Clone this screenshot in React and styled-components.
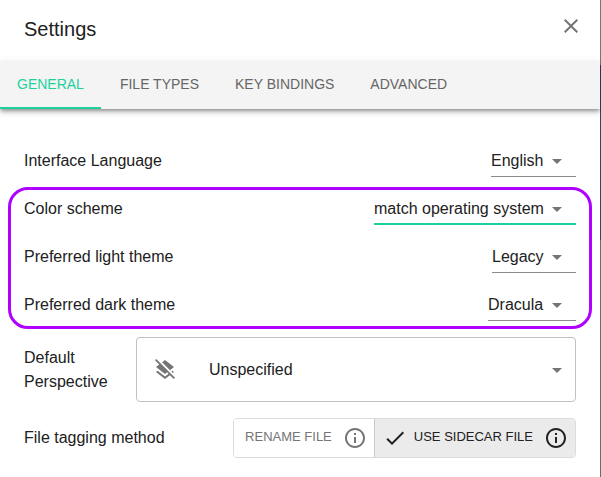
import React, { useState } from "react";
import styled, { createGlobalStyle, css } from "styled-components";
import { MdArrowDropDown, MdCheck, MdClose, MdInfoOutline, MdLayersClear } from "react-icons/md";

const GlobalStyle = createGlobalStyle`
  *, *::before, *::after { box-sizing: border-box; }
  body {
    margin: 0;
    background: linear-gradient(#77777b 0 65px, #33475f 65px 240px, #6b6b6e 240px);
    color: #212121;
    font: 16px/24px "Liberation Sans", Arial, sans-serif;
  }
  button, select { font: inherit; color: inherit; }
`;

const Dialog = styled.main`
  min-height: 100vh;
  margin-right: 1px;
  background: #fff;
`;

const Header = styled.header`
  display: flex;
  align-items: center;
  justify-content: space-between;
  height: 61px;
  padding: 0 17px 4px 24px;
`;

const Title = styled.h1`
  margin: 0;
  font-size: 20px;
  line-height: 32px;
  font-weight: 400;
`;

const IconButton = styled.button`
  display: flex;
  padding: 0;
  border: 0;
  background: none;
  color: #757575;
  margin-bottom: 5px;
  cursor: pointer;
`;

const TabBar = styled.nav`
  display: flex;
  gap: 2px;
  height: 48px;
  background: #f4f4f4;
  box-shadow: 0 2px 4px -1px rgba(0, 0, 0, 0.4), 0 4px 5px rgba(0, 0, 0, 0.14),
    0 1px 10px rgba(0, 0, 0, 0.06);
`;

const Tab = styled.button`
  padding: 0 17px;
  border: 0;
  border-bottom: 2px solid ${(p) => (p.$active ? "#1dd19f" : "transparent")};
  background: none;
  color: ${(p) => (p.$active ? "#1dd19f" : "#666")};
  font-size: 14px;
  line-height: 20px;
  text-transform: uppercase;
  white-space: nowrap;
  cursor: pointer;
`;

const Content = styled.section`
  padding: 28px 24px 12px;
`;

const Row = styled.div`
  display: flex;
  align-items: center;
  justify-content: space-between;
  gap: 16px;
  min-height: 48px;
`;

const HighlightGroup = styled.div`
  position: relative;

  &::after {
    content: "";
    position: absolute;
    inset: 2px -16px 0;
    border: 3px solid #b000ff;
    border-radius: 20px;
    pointer-events: none;
  }
`;

const PerspectiveRow = styled(Row)`
  margin: 8px 0 12px;
`;

const PerspectiveLabel = styled.label`
  flex: 0 0 96px;
`;

const SelectBox = styled.div`
  position: relative;
  display: flex;
  align-items: center;
  ${(p) => p.$wide && css`flex: 1;`}
`;

const Select = styled.select`
  appearance: none;
  height: 32px;
  padding: 0 32px 0 0;
  border: 0;
  border-bottom: 1px solid ${(p) => (p.$active ? "#1dd19f" : "#8c8c8c")};
  border-radius: 0;
  background: none;
  box-shadow: ${(p) => (p.$active ? "inset 0 -1px #1dd19f" : "none")};
  outline: 0;
`;

const OutlinedSelect = styled(Select)`
  width: 100%;
  height: 65px;
  padding: 0 32px 0 72px;
  border: 1px solid #c0c0c0;
  border-radius: 4px;
`;

const Arrow = styled(MdArrowDropDown)`
  position: absolute;
  right: 7px;
  color: #757575;
  pointer-events: none;
`;

const LeadingIcon = styled(MdLayersClear)`
  position: absolute;
  left: 17px;
  color: #757575;
  pointer-events: none;
`;

const ButtonGroup = styled.div`
  display: flex;
  height: 40px;
  border: 1px solid #dcdcdc;
  border-radius: 4px;
  overflow: hidden;
`;

const Toggle = styled.button`
  display: flex;
  align-items: center;
  gap: 8px;
  padding: 0 7px 0 8px;
  border: 0;
  background: ${(p) => (p.$active ? "#ebebeb" : "#fff")};
  color: ${(p) => (p.$active ? "#212121" : "#757575")};
  font-size: 13px;
  line-height: 24px;
  text-transform: uppercase;
  white-space: nowrap;
  cursor: pointer;

  & + & { border-left: 1px solid #c8c8c8; }
`;

const ToggleCheck = styled(MdCheck)`
  margin-right: -4px;
`;

const ToggleText = styled.span`
  padding: 0 3px 2px;
`;

const tabs = ["General", "File types", "Key bindings", "Advanced"];

const methods = [
  { id: "rename", label: "Rename file" },
  { id: "sidecar", label: "Use sidecar file" },
];

function SettingRow({ id, label, value, active }) {
  return (
    <Row>
      <label htmlFor={id}>{label}</label>
      <SelectBox>
        <Select id={id} $active={active}>
          <option>{value}</option>
        </Select>
        <Arrow size={24} aria-hidden />
      </SelectBox>
    </Row>
  );
}

export default function App() {
  const [tab, setTab] = useState("General");
  const [method, setMethod] = useState("sidecar");
  return (
    <>
      <GlobalStyle />
      <Dialog>
        <Header>
          <Title>Settings</Title>
          <IconButton aria-label="Close"><MdClose size={24} /></IconButton>
        </Header>
        <TabBar role="tablist">
          {tabs.map((name) => (
            <Tab key={name} role="tab" aria-selected={tab === name} $active={tab === name} onClick={() => setTab(name)}>
              {name}
            </Tab>
          ))}
        </TabBar>
        <Content>
          <SettingRow id="language" label="Interface Language" value="English" />
          <HighlightGroup>
            <SettingRow id="scheme" label="Color scheme" value="match operating system" active />
            <SettingRow id="light" label="Preferred light theme" value="Legacy" />
            <SettingRow id="dark" label="Preferred dark theme" value="Dracula" />
          </HighlightGroup>
          <PerspectiveRow>
            <PerspectiveLabel htmlFor="perspective">Default Perspective</PerspectiveLabel>
            <SelectBox $wide>
              <LeadingIcon size={24} aria-hidden />
              <OutlinedSelect id="perspective">
                <option>Unspecified</option>
              </OutlinedSelect>
              <Arrow size={24} aria-hidden />
            </SelectBox>
          </PerspectiveRow>
          <Row>
            <span id="tagging">File tagging method</span>
            <ButtonGroup role="group" aria-labelledby="tagging">
              {methods.map(({ id, label }) => (
                <Toggle key={id} aria-pressed={method === id} $active={method === id} onClick={() => setMethod(id)}>
                  {method === id && <ToggleCheck size={24} aria-hidden />}
                  <ToggleText>{label}</ToggleText>
                  <MdInfoOutline size={24} aria-hidden />
                </Toggle>
              ))}
            </ButtonGroup>
          </Row>
        </Content>
      </Dialog>
    </>
  );
}
